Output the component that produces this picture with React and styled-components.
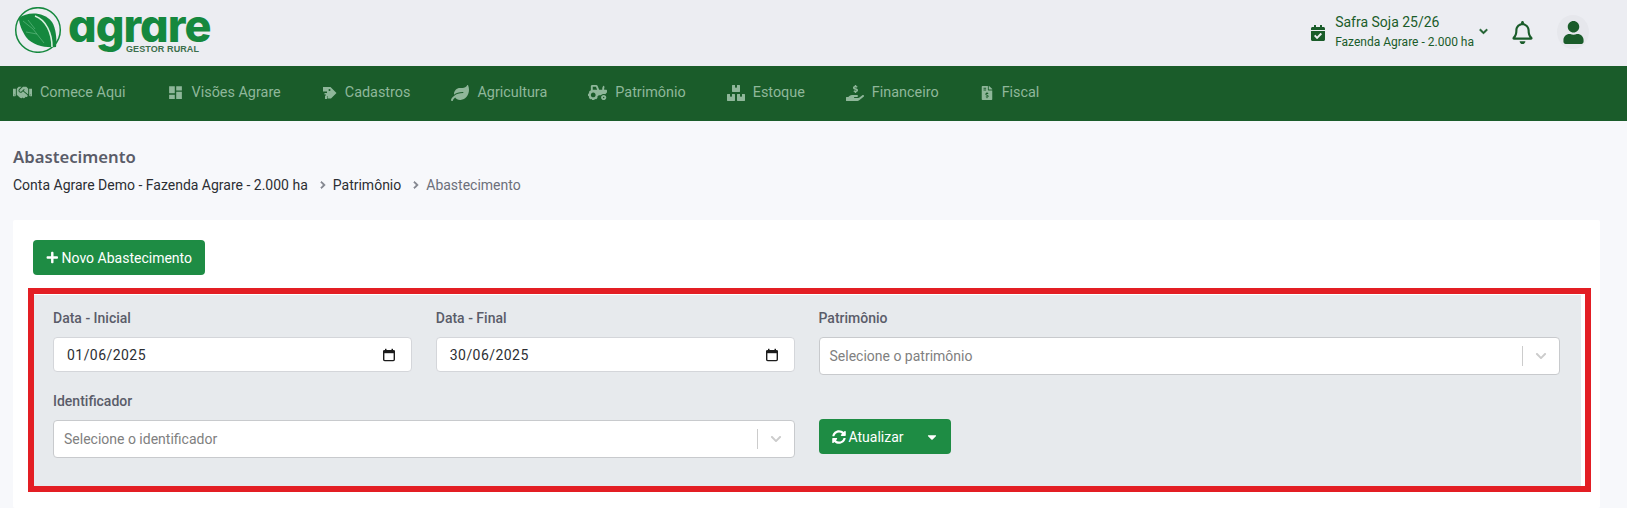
import React from "react";
import styled, { createGlobalStyle } from "styled-components";
import {
    FaHandshake,
    FaLeaf,
    FaTractor,
    FaBoxes,
    FaHandHoldingUsd,
    FaFileInvoiceDollar,
    FaCalendarCheck,
    FaRegBell,
    FaUser,
    FaPlus,
    FaSyncAlt,
    FaCaretDown,
    FaChevronDown,
    FaChevronRight,
} from "react-icons/fa";
import { MdDashboard } from "react-icons/md";

const GlobalStyle = createGlobalStyle`
    html, body {
        margin: 0;
        background: #f7f8fb;
        font-family: Roboto, "Liberation Sans", sans-serif;
    }
    * {
        box-sizing: border-box;
    }
`;

const Header = styled.header`
    height: 66px;
    background: #ecedf2;
    display: flex;
    align-items: center;
    justify-content: space-between;
    padding: 0 38px 0 13px;
`;

const Logo = styled.div`
    position: relative;
    display: flex;
    align-items: center;
    gap: 5px;
    height: 46px;
    margin-top: -7px;
`;

const LogoWord = styled.span`
    font-family: Inter, sans-serif;
    font-feature-settings: "cv11";
    font-size: 45px;
    font-weight: 800;
    letter-spacing: -1px;
    line-height: 30px;
    margin-top: -8px;
    color: #15883e;
`;

const LogoTag = styled.span`
    position: absolute;
    left: 113px;
    top: 39px;
    font-family: "Liberation Sans", sans-serif;
    font-size: 9px;
    line-height: 7px;
    font-weight: 700;
    color: #3c6e4c;
    letter-spacing: 0.1px;
`;

const HeaderRight = styled.div`
    display: flex;
    align-items: center;
    color: #1a5c2a;
`;

const Farm = styled.div`
    display: flex;
    flex-direction: column;
    margin: -2px 0 0 9px;
    gap: 4px;
`;

const FarmName = styled.span`
    font-size: 14px;
    line-height: 16px;
`;

const FarmSub = styled.span`
    font-size: 12px;
    line-height: 16px;
`;

const Chevron = styled.span`
    display: flex;
    margin: -4px 0 0 5px;
    svg {
        stroke: currentColor;
        stroke-width: 40px;
    }
`;

const Bell = styled.span`
    display: flex;
    margin: -2px 0 0 23px;
`;

const Avatar = styled.span`
    width: 32px;
    height: 34px;
    border-radius: 50%;
    background: #e6e7ec;
    display: flex;
    align-items: center;
    justify-content: center;
    margin: -2px 0 0 23px;
`;

const Nav = styled.nav`
    height: 55px;
    background: #1a5c2a;
    display: flex;
    align-items: center;
    padding: 0 0 2px 13px;
    gap: 41px;
`;

const NavItem = styled.a`
    display: flex;
    align-items: center;
    gap: 8px;
    color: #8fb79a;
    font-size: 14.4px;
    line-height: 20px;
`;

const Main = styled.main`
    padding: 0 27px 0 13px;
`;

const Title = styled.h1`
    margin: 25px 0 0;
    font-family: "Noto Sans", sans-serif;
    font-size: 16.7px;
    line-height: 22px;
    font-weight: 600;
    color: #5a5c69;
`;

const Crumbs = styled.div`
    display: flex;
    align-items: center;
    margin-top: 7px;
    font-size: 14px;
    line-height: 20px;
    color: #2c2e33;
`;

const Crumb = styled.span`
    display: flex;
    align-items: center;
    gap: 6px;
    margin-left: ${(p) => (p.$first ? 0 : "11px")};
    color: ${(p) => (p.$muted ? "#6c6f7a" : "#2c2e33")};
    svg {
        color: #7d8089;
        stroke: currentColor;
        stroke-width: 50px;
    }
`;

const Card = styled.section`
    background: #fff;
    margin-top: 25px;
    padding: 20px 9px 16px 15px;
    border-radius: 2px;
`;

const GreenButton = styled.button`
    display: inline-flex;
    align-items: center;
    height: 35px;
    padding: 0 13px;
    border: none;
    border-radius: 4px;
    background: #1e8c44;
    color: #fff;
    font-family: inherit;
    font-size: 14px;
    white-space: nowrap;
    gap: 3px;
`;

const NewButton = styled(GreenButton)`
    display: flex;
    width: 172px;
    margin-left: 5px;
`;

const Frame = styled.div`
    border: 6px solid #e31e24;
    margin-top: 13px;
    padding: 1px 4px 0 0;
`;

const Panel = styled.div`
    background: #e7eaed;
    height: 191px;
    padding: 13px 21px 0 19px;
    display: grid;
    grid-template-columns: repeat(12, 1fr);
    column-gap: 24px;
    row-gap: 16px;
    align-content: start;
`;

const Field = styled.div`
    grid-column: span ${(p) => p.$span};
    display: flex;
    flex-direction: column;
`;

const Label = styled.label`
    font-size: 14px;
    font-weight: 500;
    line-height: 20px;
    color: #5a5c69;
    margin-bottom: 9px;
`;

const DateBox = styled.div`
    height: 35px;
    background: #fff;
    border: 1px solid #d4d6da;
    border-radius: 4px;
    display: flex;
    align-items: center;
    justify-content: space-between;
    padding: 0 15px 0 13px;
    font-size: 14px;
    letter-spacing: 0.45px;
    color: #2c2e33;
`;

const SelectBox = styled.div`
    height: 38px;
    background: #fff;
    border: 1px solid #c8cacd;
    border-radius: 4px;
    display: flex;
    align-items: center;
    padding: 0 0 0 10px;
    font-size: 14px;
    color: #808080;
`;

const Placeholder = styled.span`
    flex: 1;
`;

const Separator = styled.span`
    width: 1px;
    height: 20px;
    background: #cccccc;
`;

const SelectArrow = styled.span`
    width: 36px;
    display: flex;
    justify-content: center;
    color: #cccccc;
`;

const ButtonCell = styled.div`
    grid-column: span 6;
    padding-top: 28px;
`;

const RefreshButton = styled(GreenButton)`
    width: 132px;
    justify-content: flex-start;
`;

const Caret = styled.span`
    display: flex;
    margin-left: auto;
    margin-right: -1px;
`;

const CalendarGlyph = () => (
    <svg width="14" height="14" viewBox="0 0 14 14" fill="none">
        <rect x="1.7" y="2.6" width="10.6" height="10" rx="1" stroke="#1c1c1c" strokeWidth="1.4" />
        <rect x="1" y="2.6" width="12" height="2.6" fill="#1c1c1c" />
        <rect x="3" y="0.8" width="1.5" height="2.4" fill="#1c1c1c" />
        <rect x="9.5" y="0.8" width="1.5" height="2.4" fill="#1c1c1c" />
    </svg>
);

const TagGlyph = () => (
    <svg width="15" height="15" viewBox="0 0 15 15" fill="currentColor">
        <path d="M1 2h7.5L14.5 8 9 13.5H5.5V11H4V9.5H2.5V8H5V6.5H1z" />
        <path d="M3 10.5h2V14H3z" />
        <circle cx="7.5" cy="5" r="1" fill="#1a5c2a" />
    </svg>
);

const LeafMark = () => (
    <svg width="50" height="46" viewBox="0 0 50 46" fill="none">
        <circle cx="25" cy="23" r="22.3" stroke="#15883e" strokeWidth="1.5" />
        <path d="M6 11 C14 5 30 4 39 15 C43 21 44 33 43 40 C33 41 20 39 13 30 C9 24 6 17 6 11 Z" fill="#15883e" />
        <path d="M22 9 C33 13 39 26 39 40" stroke="#d9f0df" strokeWidth="1.6" fill="none" />
        <path d="M10 14 L20 22 L31 36 M15 13 L22 22 M13 25 L24 27" stroke="#6cc08a" strokeWidth="0.6" />
    </svg>
);

const navItems = [
    { label: "Comece Aqui", icon: <FaHandshake size={19} /> },
    { label: "Visões Agrare", icon: <MdDashboard size={17} /> },
    { label: "Cadastros", icon: <TagGlyph /> },
    { label: "Agricultura", icon: <FaLeaf size={18} /> },
    { label: "Patrimônio", icon: <FaTractor size={19} /> },
    { label: "Estoque", icon: <FaBoxes size={18} /> },
    { label: "Financeiro", icon: <FaHandHoldingUsd size={18} /> },
    { label: "Fiscal", icon: <FaFileInvoiceDollar size={14} /> },
];

function App() {
    return (
        <>
            <GlobalStyle />
            <Header>
                <Logo>
                    <LeafMark />
                    <LogoWord>agrare</LogoWord>
                    <LogoTag>GESTOR RURAL</LogoTag>
                </Logo>
                <HeaderRight>
                    <FaCalendarCheck size={16} />
                    <Farm>
                        <FarmName>Safra Soja 25/26</FarmName>
                        <FarmSub>Fazenda Agrare - 2.000 ha</FarmSub>
                    </Farm>
                    <Chevron>
                        <FaChevronDown size={9} />
                    </Chevron>
                    <Bell>
                        <FaRegBell size={23} />
                    </Bell>
                    <Avatar>
                        <FaUser size={23} />
                    </Avatar>
                </HeaderRight>
            </Header>
            <Nav>
                {navItems.map((item) => (
                    <NavItem key={item.label}>
                        {item.icon}
                        {item.label}
                    </NavItem>
                ))}
            </Nav>
            <Main>
                <Title>Abastecimento</Title>
                <Crumbs>
                    <Crumb $first>Conta Agrare Demo - Fazenda Agrare - 2.000 ha</Crumb>
                    <Crumb>
                        <FaChevronRight size={8} />
                        Patrimônio
                    </Crumb>
                    <Crumb $muted>
                        <FaChevronRight size={8} />
                        Abastecimento
                    </Crumb>
                </Crumbs>
                <Card>
                    <NewButton>
                        <FaPlus size={13} />
                        Novo Abastecimento
                    </NewButton>
                    <Frame>
                        <Panel>
                            <Field $span={3}>
                                <Label>Data - Inicial</Label>
                                <DateBox>
                                    01/06/2025
                                    <CalendarGlyph />
                                </DateBox>
                            </Field>
                            <Field $span={3}>
                                <Label>Data - Final</Label>
                                <DateBox>
                                    30/06/2025
                                    <CalendarGlyph />
                                </DateBox>
                            </Field>
                            <Field $span={6}>
                                <Label>Patrimônio</Label>
                                <SelectBox>
                                    <Placeholder>Selecione o patrimônio</Placeholder>
                                    <Separator />
                                    <SelectArrow>
                                        <FaChevronDown size={12} />
                                    </SelectArrow>
                                </SelectBox>
                            </Field>
                            <Field $span={6}>
                                <Label>Identificador</Label>
                                <SelectBox>
                                    <Placeholder>Selecione o identificador</Placeholder>
                                    <Separator />
                                    <SelectArrow>
                                        <FaChevronDown size={12} />
                                    </SelectArrow>
                                </SelectBox>
                            </Field>
                            <ButtonCell>
                                <RefreshButton>
                                    <FaSyncAlt size={14} />
                                    Atualizar
                                    <Caret>
                                        <FaCaretDown size={14} />
                                    </Caret>
                                </RefreshButton>
                            </ButtonCell>
                        </Panel>
                    </Frame>
                </Card>
            </Main>
        </>
    );
}

export default App;
